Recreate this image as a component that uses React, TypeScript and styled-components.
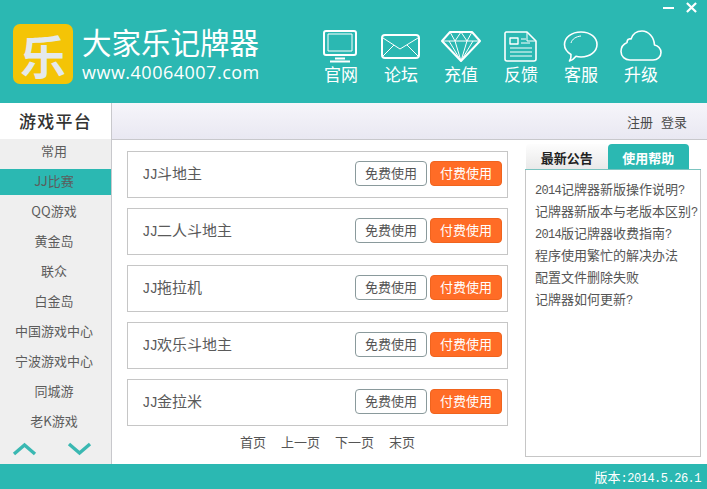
import React from 'react'
import styled, { createGlobalStyle } from 'styled-components'

const teal = '#2bb8b2'
const cjk = '"Noto Sans CJK SC", "Liberation Sans", sans-serif'

const GlobalStyle = createGlobalStyle`
  html, body {
    margin: 0;
    padding: 0;
    background: #fff;
  }
  * {
    box-sizing: border-box;
  }
`

const Window = styled.div`
  position: relative;
  width: 707px;
  height: 489px;
  display: flex;
  flex-direction: column;
  overflow: hidden;
  font-family: ${cjk};
  color: #555;
`

const Header = styled.header`
  height: 103px;
  flex: none;
  display: flex;
  align-items: flex-start;
  background: ${teal};
`

const LogoGroup = styled.div`
  width: 311px;
  flex: none;
  display: flex;
  padding: 24px 0 0 13px;
`

const LogoBadge = styled.div`
  width: 60px;
  height: 60px;
  border-radius: 7px;
  background: #f4c406;
  display: flex;
  align-items: center;
  justify-content: center;
  font-size: 46px;
  font-weight: 700;
  line-height: 60px;
  color: #e4e9ec;
`

const Brand = styled.div`
  margin-left: 9px;
  display: flex;
  flex-direction: column;
  color: #fff;
`

const BrandTitle = styled.div`
  font-size: 29.5px;
  line-height: 36px;
  margin-top: -1px;
  white-space: nowrap;
`

const BrandUrl = styled.div`
  font-family: "Open Sans", sans-serif;
  font-size: 18px;
  line-height: 22px;
  margin-top: 2px;
  letter-spacing: 0.5px;
  white-space: nowrap;
`

const Nav = styled.nav`
  display: flex;
  padding-top: 29px;
`

const NavItem = styled.div`
  width: 60px;
  height: 55px;
  display: flex;
  flex-direction: column;
  align-items: center;
  justify-content: space-between;
  color: #fff;
  font-size: 17px;
  line-height: 20px;
  white-space: nowrap;
`

const NavIcon = styled.svg`
  width: 42px;
  height: 35px;
  flex: none;
  fill: none;
  stroke: #fff;
  stroke-width: 1.5;
  stroke-linejoin: round;
`

const WindowControls = styled.div`
  position: absolute;
  top: 2px;
  right: 10px;
  display: flex;
  align-items: center;
  gap: 12px;
`

const MinimizeMark = styled.span`
  width: 11px;
  height: 2px;
  background: #fff;
`

const CloseIcon = styled.svg`
  width: 11px;
  height: 11px;
  stroke: #fff;
  stroke-width: 2.4;
`

const Middle = styled.div`
  flex: 1;
  min-height: 0;
  display: flex;
`

const Sidebar = styled.aside`
  width: 112px;
  flex: none;
  display: flex;
  flex-direction: column;
  background: #efefef;
  border-right: 1px solid #c8c8cc;
`

const SidebarTitle = styled.div`
  height: 36px;
  flex: none;
  padding-bottom: 2px;
  background: #fff;
  display: flex;
  align-items: center;
  justify-content: center;
  color: #333;
  font-size: 17px;
  letter-spacing: 1.2px;
  font-weight: 500;
`

const SideList = styled.div`
  flex: 1;
  display: flex;
  flex-direction: column;
  gap: 4px;
`

const SideItem = styled.div<{ $active?: boolean }>`
  height: 26px;
  padding: 0 3px 3px 0;
  display: flex;
  align-items: center;
  justify-content: center;
  font-size: 13px;
  color: #5c5c5c;
  background: ${(p) => (p.$active ? teal : 'transparent')};
  white-space: nowrap;
`

const SideArrows = styled.div`
  height: 27px;
  flex: none;
  display: flex;
  justify-content: space-between;
  padding: 5px 19px 0 12px;
`

const ArrowIcon = styled.svg`
  width: 25px;
  height: 14px;
  fill: none;
  stroke: #3ab8b2;
  stroke-width: 3.4;
`

const Main = styled.main`
  flex: 1;
  min-width: 0;
  display: flex;
  flex-direction: column;
`

const TopBar = styled.div`
  height: 37px;
  flex: none;
  display: flex;
  align-items: center;
  justify-content: flex-end;
  gap: 8px;
  padding-right: 20px;
  background: linear-gradient(#f6f5fa, #e9e8f2);
  border-bottom: 1px solid #c8c8cc;
  font-size: 13px;
  color: #4a4a4a;
`

const Content = styled.div`
  flex: 1;
  display: flex;
  padding-left: 15px;
`

const GameColumn = styled.div`
  width: 381px;
  flex: none;
  padding-top: 11px;
  display: flex;
  flex-direction: column;
  gap: 10px;
`

const GameRow = styled.div`
  height: 47px;
  display: flex;
  align-items: center;
  padding: 0 5px 0 14px;
  background: #fff;
  border: 1px solid #c6c6c6;
`

const GameName = styled.div`
  flex: 1;
  padding-bottom: 2px;
  font-size: 15px;
  line-height: 20px;
  color: #5a5a5a;
`

const Half = styled.span<{ $size: number; $track: number }>`
  font-family: "Liberation Mono", monospace;
  font-size: ${(p) => p.$size}px;
  letter-spacing: ${(p) => p.$track}px;
`

const UseButton = styled.button<{ $paid?: boolean }>`
  width: 72px;
  height: 25px;
  margin: 0 0 2px ${(p) => (p.$paid ? '3px' : '0')};
  padding: 0 0 2px;
  font-family: ${cjk};
  font-size: 13px;
  border-radius: 4px;
  border: 1px solid ${(p) => (p.$paid ? '#f0641e' : '#8a9a9c')};
  background: ${(p) => (p.$paid ? '#ff6c26' : '#fff')};
  color: ${(p) => (p.$paid ? '#fff' : '#555')};
`

const Pager = styled.div`
  display: flex;
  justify-content: center;
  gap: 15px;
  margin-top: -3px;
  padding-left: 20px;
  font-size: 13px;
  line-height: 18px;
  color: #555;
`

const HelpColumn = styled.div`
  width: 176px;
  flex: none;
  margin-left: 17px;
  padding-top: 4px;
  display: flex;
  flex-direction: column;
`

const Tabs = styled.div`
  height: 26px;
  flex: none;
  display: flex;
  padding-left: 1px;
  border-bottom: 1px solid #7cc4c0;
`

const Tab = styled.div<{ $active?: boolean }>`
  width: 81.5px;
  display: flex;
  align-items: center;
  justify-content: center;
  padding-top: 1px;
  font-size: 13px;
  font-weight: 700;
  border-radius: 4px 4px 0 0;
  color: ${(p) => (p.$active ? '#fff' : '#222')};
  background: ${(p) => (p.$active ? teal : 'linear-gradient(#fdfdfd, #e9e9e9)')};
`

const HelpPanel = styled.div`
  height: 287px;
  padding: 8px 0 0 9px;
  border: 1px solid #c6c6c6;
  border-top: 0;
  background: #fff;
`

const HelpLink = styled.div`
  height: 22px;
  font-size: 13px;
  line-height: 22px;
  color: #555;
  white-space: pre;
`

const Footer = styled.footer`
  height: 25px;
  flex: none;
  padding-right: 6px;
  background: ${teal};
  color: #fff;
  font-size: 13px;
  line-height: 26px;
  text-align: right;
`

const sideGames = ['常用', 'JJ比赛', 'QQ游戏', '黄金岛', '联众', '白金岛', '中国游戏中心', '宁波游戏中心', '同城游', '老K游戏']
const games = ['斗地主', '二人斗地主', '拖拉机', '欢乐斗地主', '金拉米']

const App: React.FC = () => {
  return (
    <Window>
      <GlobalStyle />
      <Header>
        <LogoGroup>
          <LogoBadge>乐</LogoBadge>
          <Brand>
            <BrandTitle>大家乐记牌器</BrandTitle>
            <BrandUrl>www.40064007.com</BrandUrl>
          </Brand>
        </LogoGroup>
        <Nav>
          <NavItem>
            <NavIcon viewBox="0 0 42 35">
              <rect x="4" y="2" width="32" height="24" rx="2" strokeWidth="2" />
              <rect x="8" y="5" width="24" height="17" strokeWidth="1" />
              <path d="M15 29.500h10M10 32.500h20" strokeWidth="2" />
            </NavIcon>
            官网
          </NavItem>
          <NavItem>
            <NavIcon viewBox="0 0 42 35">
              <rect x="2" y="6" width="37" height="23" rx="3" strokeWidth="2" />
              <path d="M3 9l17 11L38 9M3 27l11-11M38 27L27 16" strokeWidth="1" />
            </NavIcon>
            论坛
          </NavItem>
          <NavItem>
            <NavIcon viewBox="0 0 42 35">
              <path d="M10 3h22l8 9-19 20L2 12z" strokeWidth="2" />
              <path d="M2 12h38M10 3l5 9 6-9 6 9 5-9M15 12l6 20 6-20M9 12l12 20M33 12L21 32" strokeWidth="1" />
            </NavIcon>
            充值
          </NavItem>
          <NavItem>
            <NavIcon viewBox="0 0 42 35">
              <path d="M6 3h21l9 9v18a2 2 0 0 1-2 2H7a2 2 0 0 1-2-2V4z" strokeWidth="1.600" />
              <path d="M27 3v9h9" strokeWidth="1" />
              <rect x="10" y="9" width="8" height="6" strokeWidth="1.400" />
              <path d="M21 10h5M21 14h9M10 19h22M10 23h22M10 27h22" strokeWidth="1" />
            </NavIcon>
            反馈
          </NavItem>
          <NavItem>
            <NavIcon viewBox="0 0 42 35">
              <path d="M21 3c9.500 0 16 5.500 16 12.500S30 28 21 28c-2 0-3.500-.2-5-.7-1.500 2-4 4-6.500 4.700 1.200-2 1.800-4 1.500-6.500C7 23 4.500 19.500 4.500 15.500 4.500 8.500 11.500 3 21 3z" strokeWidth="1.600" />
              <path d="M11 14c1-4 5-6.500 10-7" strokeWidth="1" />
            </NavIcon>
            客服
          </NavItem>
          <NavItem>
            <NavIcon viewBox="0 0 42 35">
              <path d="M10 31h23c4.500 0 8-3 8-7.500 0-4-3-7-6.500-7.500C34 8 28.500 2 22 2c-5.500 0-9.500 3.500-11 8-1-.2-1.500-.2-2 0-1.500.5-2 2-2 3.500C3.500 15 1 18.500 1 22.500 1 27.500 5 31 10 31z" strokeWidth="1.600" />
            </NavIcon>
            升级
          </NavItem>
        </Nav>
        <WindowControls>
          <MinimizeMark />
          <CloseIcon viewBox="0 0 12 12">
            <path d="M1 1l10 10M11 1L1 11" />
          </CloseIcon>
        </WindowControls>
      </Header>
      <Middle>
        <Sidebar>
          <SidebarTitle>游戏平台</SidebarTitle>
          <SideList>
            {sideGames.map((name) => (
              <SideItem key={name} $active={name === 'JJ比赛'}>{name}</SideItem>
            ))}
          </SideList>
          <SideArrows>
            <ArrowIcon viewBox="0 0 25 14">
              <path d="M2 12L12.500 3 23 12" />
            </ArrowIcon>
            <ArrowIcon viewBox="0 0 25 14">
              <path d="M2 2l10.500 9L23 2" />
            </ArrowIcon>
          </SideArrows>
        </Sidebar>
        <Main>
          <TopBar>
            <span>注册</span>
            <span>登录</span>
          </TopBar>
          <Content>
            <GameColumn>
              {games.map((name) => (
                <GameRow key={name}>
                  <GameName><Half $size={14} $track={-0.9}>JJ</Half>{name}</GameName>
                  <UseButton>免费使用</UseButton>
                  <UseButton $paid>付费使用</UseButton>
                </GameRow>
              ))}
              <Pager>
                <span>首页</span>
                <span>上一页</span>
                <span>下一页</span>
                <span>末页</span>
              </Pager>
            </GameColumn>
            <HelpColumn>
              <Tabs>
                <Tab>最新公告</Tab>
                <Tab $active>使用帮助</Tab>
              </Tabs>
              <HelpPanel>
                <HelpLink><Half $size={12} $track={-0.7}>2014</Half>记牌器新版操作说明<Half $size={12} $track={-0.7}>?</Half></HelpLink>
                <HelpLink>记牌器新版本与老版本区别<Half $size={12} $track={-0.7}>?</Half></HelpLink>
                <HelpLink><Half $size={12} $track={-0.7}>2014</Half>版记牌器收费指南<Half $size={12} $track={-0.7}>?</Half></HelpLink>
                <HelpLink>程序使用繁忙的解决办法</HelpLink>
                <HelpLink>配置文件删除失败</HelpLink>
                <HelpLink>记牌器如何更新<Half $size={12} $track={-0.7}>?</Half></HelpLink>
              </HelpPanel>
            </HelpColumn>
          </Content>
        </Main>
      </Middle>
      <Footer>版本<Half $size={12} $track={-0.5}>:2014.5.26.1</Half></Footer>
    </Window>
  )
}

export default App
